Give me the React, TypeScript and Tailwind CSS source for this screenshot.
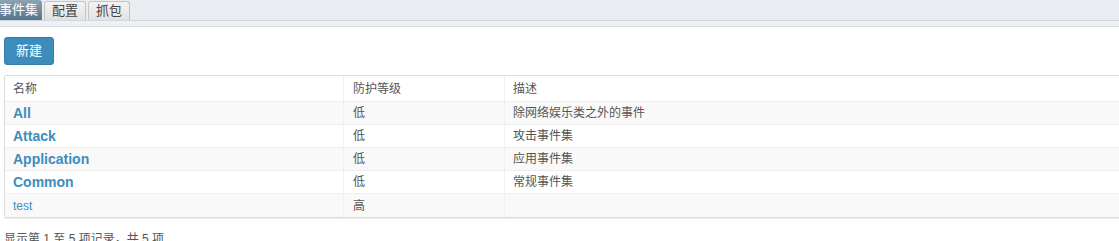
import * as React from 'react';

type EventSet = { name: string; level: string; desc: string; builtin: boolean };

const rows: EventSet[] = [
  { name: 'All', level: '低', desc: '除网络娱乐类之外的事件', builtin: true },
  { name: 'Attack', level: '低', desc: '攻击事件集', builtin: true },
  { name: 'Application', level: '低', desc: '应用事件集', builtin: true },
  { name: 'Common', level: '低', desc: '常规事件集', builtin: true },
  { name: 'test', level: '高', desc: '', builtin: false },
];

const font = { fontFamily: '"Liberation Sans", Arial, "Noto Sans CJK SC", sans-serif' };

const App: React.FC = () => {
  return (
    <div className="w-[1119px] h-[241px] overflow-hidden bg-white text-[12px] text-[#555]" style={font}>
      {/* Tabs */}
      <div className="h-[21px] bg-[#e9edf2] border-b border-[#d4d8dd] flex items-end gap-[2px] pl-0">
        <div className="h-[20px] w-[43px] rounded-tr-[3px] bg-gradient-to-b from-[#8ea3b5] to-[#56748d] text-white text-[13px] leading-[20px] whitespace-nowrap overflow-hidden -ml-[1px] pl-0">
          事件集
        </div>
        <div className="h-[19px] px-[7px] rounded-t-[3px] border border-b-0 border-[#c4c4c4] bg-gradient-to-b from-[#f3f3f3] to-[#e2e2e2] text-[#444] text-[13px] leading-[18px]">
          配置
        </div>
        <div className="h-[19px] px-[7px] rounded-t-[3px] border border-b-0 border-[#c4c4c4] bg-gradient-to-b from-[#f3f3f3] to-[#e2e2e2] text-[#444] text-[13px] leading-[18px]">
          抓包
        </div>
      </div>
      <div className="h-[6px] bg-[#edf0f4] border-b border-[#d8dbe0]" />

      <div className="pl-[4px] pt-[10px]">
        <button className="h-[28px] w-[50px] rounded-[3px] bg-[#3c8dbc] border border-[#367fa9] text-white text-[13px]">
          新建
        </button>

        <div className="mt-[10px] w-[1140px] border border-[#dcdcdc] rounded-[2px] shadow-[0_1px_1px_rgba(0,0,0,0.08)]">
          <div className="flex h-[26px] items-center border-b border-[#eeeeee] bg-white">
            <div className="w-[338px] pl-[8px]">名称</div>
            <div className="w-[161px] h-full flex items-center pl-[9px] border-l border-[#f0f0f0]">防护等级</div>
            <div className="flex-1 h-full flex items-center pl-[8px] border-l border-[#f0f0f0]">描述</div>
          </div>
          {rows.map((r, i) => (
            <div
              key={r.name}
              className={`flex h-[23px] items-center ${i < rows.length - 1 ? 'border-b border-[#eeeeee]' : ''} ${i % 2 === 0 ? 'bg-[#f9f9f9]' : 'bg-white'}`}
            >
              <div className="w-[338px] pl-[8px]">
                {r.builtin ? (
                  <span className="text-[14px] font-bold text-[#3c8dbc]">{r.name}</span>
                ) : (
                  <span className="text-[12px] text-[#3c8dbc]">{r.name}</span>
                )}
              </div>
              <div className="w-[161px] h-full flex items-center pl-[9px] border-l border-[#f0f0f0]">{r.level}</div>
              <div className="flex-1 h-full flex items-center pl-[8px] border-l border-[#f0f0f0]">{r.desc}</div>
            </div>
          ))}
        </div>

        <div className="mt-[13px] text-[12px] text-[#555] leading-[16px]">显示第 1 至 5 项记录，共 5 项</div>
      </div>
    </div>
  );
};

export default App;
